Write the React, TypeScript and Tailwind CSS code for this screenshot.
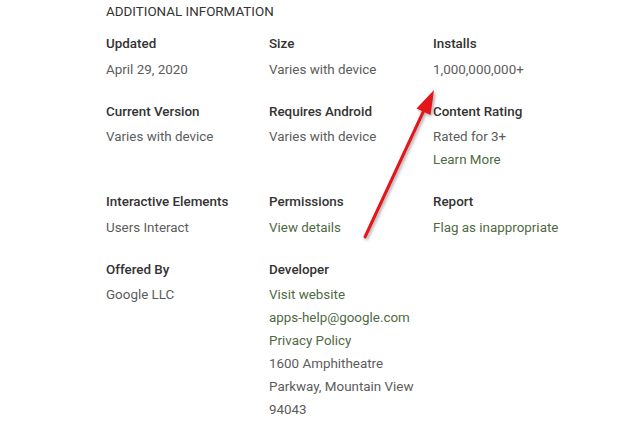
import React from "react";

type Cell = { label: string; values: { text: string; link?: boolean }[] };

const rows: Cell[][] = [
  [
    { label: "Updated", values: [{ text: "April 29, 2020" }] },
    { label: "Size", values: [{ text: "Varies with device" }] },
    { label: "Installs", values: [{ text: "1,000,000,000+" }] },
  ],
  [
    { label: "Current Version", values: [{ text: "Varies with device" }] },
    { label: "Requires Android", values: [{ text: "Varies with device" }] },
    {
      label: "Content Rating",
      values: [{ text: "Rated for 3+" }, { text: "Learn More", link: true }],
    },
  ],
  [
    { label: "Interactive Elements", values: [{ text: "Users Interact" }] },
    { label: "Permissions", values: [{ text: "View details", link: true }] },
    { label: "Report", values: [{ text: "Flag as inappropriate", link: true }] },
  ],
  [
    { label: "Offered By", values: [{ text: "Google LLC" }] },
    {
      label: "Developer",
      values: [
        { text: "Visit website", link: true },
        { text: "apps-help@google.com", link: true },
        { text: "Privacy Policy", link: true },
        { text: "1600 Amphitheatre" },
        { text: "Parkway, Mountain View" },
        { text: "94043" },
      ],
    },
  ],
];

export default function App() {
  return (
    <div
      className="relative w-[640px] h-[426px] overflow-hidden bg-white"
      style={{ fontFamily: "Roboto, 'Liberation Sans', sans-serif" }}
    >
      <div className="pl-[106px] pt-[3px]">
        <div className="text-[13.4px] leading-[18px] text-[#333333] uppercase">
          Additional Information
        </div>
        <div className="mt-[13px] flex flex-col gap-[21px]">
          {rows.map((row, i) => (
            <div key={i} className="grid grid-cols-[163px_164px_164px]">
              {row.map((c) => (
                <div key={c.label}>
                  <div className="text-[13.4px] leading-[20px] font-medium text-[#333333] mb-[3.5px]">
                    {c.label}
                  </div>
                  {c.values.map((v) => (
                    <div
                      key={v.text}
                      className={
                        "text-[13.4px] leading-[23px] " +
                        (v.link ? "text-[#4f6a43]" : "text-[#5c5c5c]")
                      }
                    >
                      {v.text}
                    </div>
                  ))}
                </div>
              ))}
            </div>
          ))}
        </div>
      </div>
      <svg
        className="absolute left-0 top-0 pointer-events-none"
        width="640"
        height="426"
        viewBox="0 0 640 426"
      >
        <defs>
          <filter id="sh" x="-50%" y="-50%" width="200%" height="200%">
            <feDropShadow dx="1.5" dy="1.5" stdDeviation="1.5" floodColor="#000" floodOpacity="0.35" />
          </filter>
        </defs>
        <g filter="url(#sh)">
          <line x1="365" y1="237" x2="425" y2="108" stroke="#e3141a" strokeWidth="3" strokeLinecap="round" />
          <polygon points="434,90 430.5,115 416.5,108.5" fill="#e3141a" />
        </g>
      </svg>
    </div>
  );
}
